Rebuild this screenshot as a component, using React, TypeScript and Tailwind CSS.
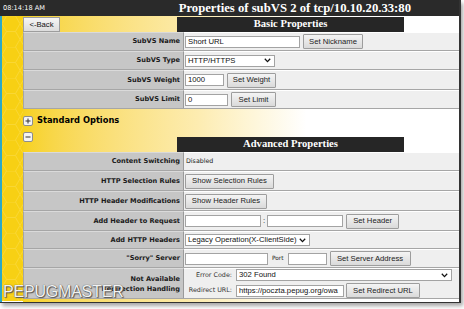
import React from "react";

const LBL = "font-['DejaVu_Sans',Verdana,sans-serif] font-bold text-[6.6px] text-[#1a1a1a] leading-none";
const CTL = "font-['Liberation_Sans',Arial,sans-serif] text-[7.7px] leading-none text-[#111]";

function Btn({ children, w }: { children: React.ReactNode; w: string }) {
  return (
    <div
      className={`${CTL} ${w} h-[15px] shrink-0 flex items-center justify-center border border-[#9d9d9d] rounded-[1px] bg-linear-to-b from-[#f4f4f4] to-[#dadada] text-[#222]`}
    >
      {children}
    </div>
  );
}

function Input({ w, value }: { w: string; value?: string }) {
  return (
    <div className={`${CTL} ${w} h-[12px] shrink-0 flex items-center px-[2px] bg-white border border-[#a3a3a3] overflow-hidden whitespace-nowrap`}>
      {value}
    </div>
  );
}

function Chevron() {
  return (
    <svg width="7" height="5" viewBox="0 0 7 5" className="shrink-0">
      <path d="M0.8 0.8 L3.5 3.6 L6.2 0.8" fill="none" stroke="#111" strokeWidth="1.3" />
    </svg>
  );
}

function Select({ w, value }: { w: string; value: string }) {
  return (
    <div className={`${CTL} ${w} h-[12px] shrink-0 flex items-center justify-between pl-[2px] pr-[3px] bg-white border border-[#a3a3a3] whitespace-nowrap`}>
      <span>{value}</span>
      <Chevron />
    </div>
  );
}

function Row({ label, h, children }: { label: React.ReactNode; h: string; children?: React.ReactNode }) {
  return (
    <div className={`flex ${h} border-b border-[#a6a6a6]`}>
      <div className={`${LBL} w-[161px] shrink-0 flex items-center justify-end text-right pr-[3px] bg-[#c6c6c6] border-l border-[#a6a6a6] border-r border-r-[#9a9a9a] border-t border-t-[#dadada]`}>
        {label}
      </div>
      <div className="flex-1 flex items-center gap-[3px] pl-[1px] bg-[#efefef] border-t border-t-white">{children}</div>
    </div>
  );
}

function Header({ text }: { text: string }) {
  return (
    <div className="w-[227px] h-[15px] shrink-0 bg-[#262626] flex items-center justify-center font-['Liberation_Serif','Times_New_Roman',serif] font-bold text-[10.6px] text-white leading-none">
      {text}
    </div>
  );
}

function Honeycomb() {
  return (
    <svg width="21" height="285" className="block">
      <defs>
        <pattern id="hex" width="18" height="31" patternUnits="userSpaceOnUse">
          <path
            d="M4.5 0 L13.5 0 L18 7.8 L13.5 15.5 L4.5 15.5 L0 7.8 Z M13.5 15.5 L18 23.3 L13.5 31 M4.5 15.5 L0 23.3 L4.5 31"
            fill="none"
            stroke="#fbdc4a"
            strokeWidth="1"
          />
        </pattern>
      </defs>
      <rect width="21" height="285" fill="#f7d014" />
      <rect width="21" height="285" fill="url(#hex)" opacity="0.6" />
    </svg>
  );
}

function BoxIcon({ sign }: { sign: "+" | "-" }) {
  return (
    <svg width="10" height="10" viewBox="0 0 10 10" className="shrink-0">
      <rect x="0.5" y="0.5" width="9" height="9" rx="1.5" fill="#f4f4f4" stroke="#8d8d8d" />
      <path d="M2.5 5 H7.5" stroke="#333" strokeWidth="1" />
      {sign === "+" && <path d="M5 2.5 V7.5" stroke="#333" strokeWidth="1" />}
    </svg>
  );
}

export default function App() {
  return (
    <div className="w-[464px] h-[309px] bg-white relative overflow-hidden">
      <div className="w-[461px] h-[303px] flex flex-col border-r-2 border-b border-[#333] shadow-[2px_3px_4px_rgba(0,0,0,0.35)]">
        {/* top bar */}
        <div className="h-[16px] shrink-0 bg-[#2a2a2a] flex items-center">
          <span className="pl-[3px] font-['DejaVu_Sans',Verdana,sans-serif] text-[6.6px] text-white leading-none">08:14:18 AM</span>
          <span className="ml-auto pr-[48px] font-['Liberation_Serif','Times_New_Roman',serif] font-bold text-[12.7px] text-white leading-none">
            Properties of subVS 2 of tcp/10.10.20.33:80
          </span>
        </div>
        {/* body */}
        <div className="flex flex-1 min-h-0">
          <div className="w-[23px] shrink-0 flex">
            <div className="w-[2px] bg-[#2aa8c8]" />
            <Honeycomb />
          </div>
          <div className="flex-1 flex flex-col bg-linear-to-r from-[#f7d21c] via-[#fdecb0] via-40% to-white to-65%">
            {/* back + basic header */}
            <div className="h-[16px] flex items-start pt-[1px]">
              <div className={`${CTL} w-[37px] h-[15px] flex items-center justify-center border border-[#9d9d9d] bg-linear-to-b from-[#f6f6f6] to-[#dcdcdc]`}>
                &lt;-Back
              </div>
              <div className="ml-[117px]">
                <Header text="Basic Properties" />
              </div>
            </div>
            {/* basic table */}
            <Row label="SubVS Name" h="h-[19px]">
              <Input w="w-[115px]" value="Short URL" />
              <Btn w="w-[60px]">Set Nickname</Btn>
            </Row>
            <Row label="SubVS Type" h="h-[19px]">
              <Select w="w-[90px]" value="HTTP/HTTPS" />
            </Row>
            <Row label="SubVS Weight" h="h-[20px]">
              <Input w="w-[39px]" value="1000" />
              <Btn w="w-[49px]">Set Weight</Btn>
            </Row>
            <Row label="SubVS Limit" h="h-[19px]">
              <Input w="w-[43px]" value="0" />
              <Btn w="w-[45px]">Set Limit</Btn>
            </Row>
            {/* section area */}
            <div className="h-[20px] flex items-center gap-[4px] pt-[3px]">
              <BoxIcon sign="+" />
              <span className="font-['DejaVu_Sans',Verdana,sans-serif] font-bold text-[8.3px] text-black leading-none">Standard Options</span>
            </div>
            <div className="h-[23px] flex items-start">
              <div className="mt-[3px]">
                <BoxIcon sign="-" />
              </div>
              <div className="ml-[144px] mt-[8px]">
                <Header text="Advanced Properties" />
              </div>
            </div>
            {/* advanced table */}
            <Row label="Content Switching" h="h-[19px]">
              <span className="font-['DejaVu_Sans',Verdana,sans-serif] text-[6.3px] text-[#222] leading-none pl-[1px]">Disabled</span>
            </Row>
            <Row label="HTTP Selection Rules" h="h-[20px]">
              <Btn w="w-[89px]">Show Selection Rules</Btn>
            </Row>
            <Row label="HTTP Header Modifications" h="h-[20px]">
              <Btn w="w-[82px]">Show Header Rules</Btn>
            </Row>
            <Row label="Add Header to Request" h="h-[20px]">
              <Input w="w-[76px]" />
              <span className={`${CTL} -mx-[1px]`}>:</span>
              <Input w="w-[76px]" />
              <Btn w="w-[53px]">Set Header</Btn>
            </Row>
            <Row label="Add HTTP Headers" h="h-[18px]">
              <Select w="w-[125px]" value="Legacy Operation(X-ClientSide)" />
            </Row>
            <Row label={'"Sorry" Server'} h="h-[19px]">
              <Input w="w-[83px]" />
              <span className="font-['DejaVu_Sans',Verdana,sans-serif] text-[5.8px] text-[#222] leading-none px-[1px]">Port</span>
              <Input w="w-[39px]" />
              <Btn w="w-[81px]">Set Server Address</Btn>
            </Row>
            <Row
              label={
                <span className="leading-[10px]">
                  Not Available
                  <br />
                  Redirection Handling
                </span>
              }
              h="h-[31px]"
            >
              <div className="grid grid-cols-[47px_1fr] gap-x-[4px] gap-y-[2px] items-center">
                <span className="font-['DejaVu_Sans',Verdana,sans-serif] text-[6.4px] text-[#333] leading-none text-right">Error Code:</span>
                <Select w="w-[216px]" value="302 Found" />
                <span className="font-['DejaVu_Sans',Verdana,sans-serif] text-[6.4px] text-[#333] leading-none text-right">Redirect URL:</span>
                <div className="flex items-center gap-[2px]">
                  <Input w="w-[108px]" value="https://poczta.pepug.org/owa" />
                  <Btn w="w-[74px]">Set Redirect URL</Btn>
                </div>
              </div>
            </Row>
          </div>
        </div>
      </div>
      {/* watermark */}
      <div className="absolute left-[3px] top-[284px] font-['Liberation_Sans',Arial,sans-serif] text-[16px] leading-none text-[#f2f2f2] tracking-[-0.2px] [text-shadow:0_0_1px_#333,1px_1px_1px_#555]">
        PEPUGMASTER
      </div>
    </div>
  );
}
